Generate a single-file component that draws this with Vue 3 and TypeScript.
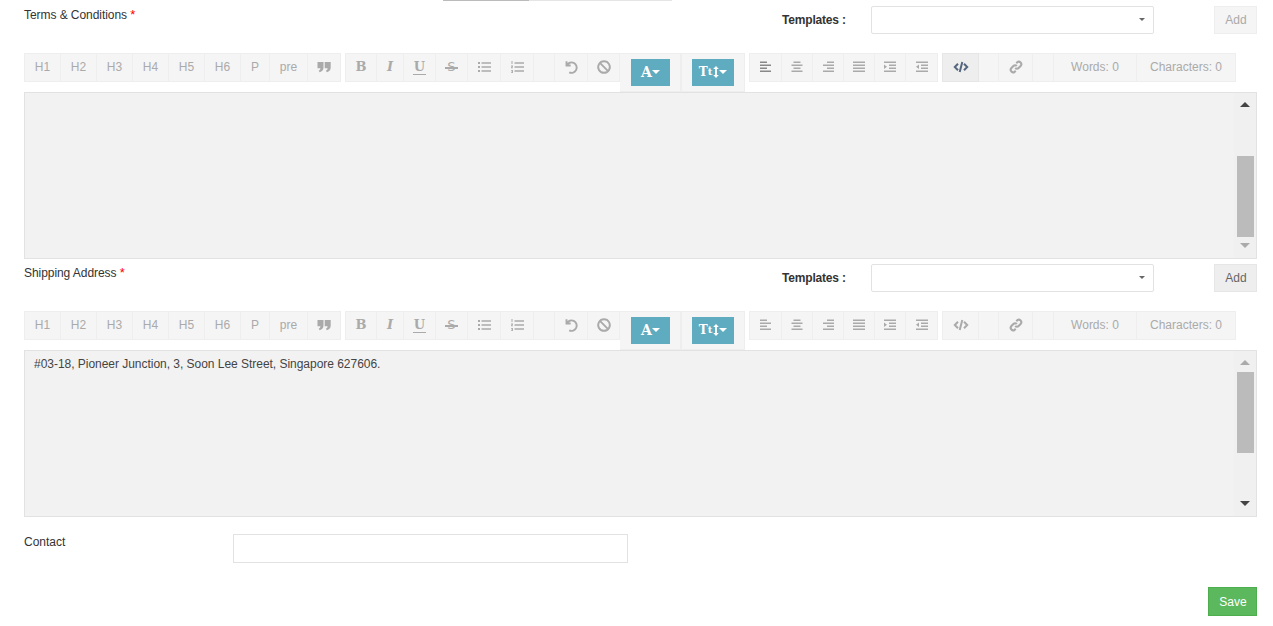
<script setup lang="ts">
interface Tool { w: number; label?: string; glyph?: string; icon?: string; cls?: string }

const icons: Record<string, { fill?: string; stroke?: string; sw?: number }> = {
  quote: { fill: 'M1.500 3h6v5.500c0 2.500-1.300 4-3.900 4.800L2.700 11.600C3.900 11 4.400 10.300 4.400 9.200H1.500zM8.700 3h6v5.500c0 2.500-1.300 4-3.900 4.800l-.9-1.700c1.200-.6 1.700-1.300 1.700-2.400H8.700z' },
  ul: { fill: 'M2 3h2v2H2zM2 7h2v2H2zM2 11h2v2H2zM5.500 3.300H15v1.400H5.500zM5.500 7.300H15v1.400H5.500zM5.500 11.300H15v1.400H5.500z' },
  ol: { fill: 'M2.500 2h1v3h-1zM2 6.500h2v1l-1 1h1v.8H2v-.8l1-1H2zM2 11h2v3H2v-.7h1.200v-.4H2.600v-.6h.6v-.6H2zM5.500 3.300H15v1.400H5.500zM5.500 7.300H15v1.400H5.500zM5.500 11.300H15v1.400H5.500z' },
  undo: { stroke: 'M3.500 2.300v4.200h4.200M3.800 6.400A5.200 5.200 0 1 1 6.200 13.300', sw: 1.900 },
  ban: { stroke: 'M8 2.200a5.800 5.800 0 1 0 .01 0zM3.900 3.900l8.200 8.200', sw: 1.900 },
  left: { fill: 'M2 2.500h7V4H2zM2 5.500h11V7H2zM2 8.500h7V10H2zM2 11.500h11V13H2z' },
  center: { fill: 'M4.500 2.500h7V4h-7zM2.500 5.500h11V7h-11zM4.500 8.500h7V10h-7zM2.500 11.500h11V13h-11z' },
  right: { fill: 'M7 2.500h7V4H7zM3 5.500h11V7H3zM7 8.500h7V10H7zM3 11.500h11V13H3z' },
  justify: { fill: 'M2 2.500h12V4H2zM2 5.500h12V7H2zM2 8.500h12V10H2zM2 11.500h12V13H2z' },
  indent: { fill: 'M2 2.500h12V4H2zM7 5.500h7V7H7zM7 8.500h7V10H7zM2 11.500h12V13H2zM2 5.500l3 2.300-3 2.200z' },
  outdent: { fill: 'M2 2.500h12V4H2zM7 5.500h7V7H7zM7 8.500h7V10H7zM2 11.500h12V13H2zM5 5.500l-3 2.300 3 2.200z' },
  code: { stroke: 'M5 4.800 1.800 8 5 11.200M11 4.800 14.200 8 11 11.200M9.300 3l-2.600 10', sw: 2 },
  link: { stroke: 'M7.200 9a2.400 2.400 0 0 0 3.400 0l2.200-2.300a2.500 2.500 0 0 0-3.500-3.500L8.300 4.200M8.800 7a2.400 2.400 0 0 0-3.400 0L3.200 9.300a2.500 2.500 0 0 0 3.500 3.500l1-1', sw: 2.100 }
}

const groupA: Tool[] = [
  { w: 37, label: 'H1' }, { w: 36, label: 'H2' }, { w: 36, label: 'H3' }, { w: 36, label: 'H4' },
  { w: 36, label: 'H5' }, { w: 36, label: 'H6' }, { w: 29, label: 'P' }, { w: 38, label: 'pre' },
  { w: 33, icon: 'quote' }
]
const groupB: Tool[] = [
  { w: 32, glyph: 'B', cls: 'g-b' }, { w: 27, glyph: 'I', cls: 'g-i' }, { w: 32, glyph: 'U', cls: 'g-u' },
  { w: 32, glyph: 'S', cls: 'g-s' }, { w: 33, icon: 'ul' }, { w: 33, icon: 'ol' }, { w: 21 },
  { w: 33, icon: 'undo' }, { w: 32, icon: 'ban' }
]
const groupD: Tool[] = [
  { w: 33, icon: 'left' }, { w: 31, icon: 'center' }, { w: 31, icon: 'right' },
  { w: 31, icon: 'justify' }, { w: 31, icon: 'indent' }, { w: 32, icon: 'outdent' }
]
const groupE: Tool[] = [
  { w: 37, icon: 'code' }, { w: 20 }, { w: 34, icon: 'link' }, { w: 21 },
  { w: 83, label: 'Words: 0' }, { w: 99, label: 'Characters: 0' }
]

const sections = [
  { id: 1, label: 'Terms & Conditions', text: '', thumbTop: 44, upDark: true, live: false },
  { id: 2, label: 'Shipping Address', text: '#03-18, Pioneer Junction, 3, Soon Lee Street, Singapore 627606.', thumbTop: 2, upDark: false, live: true }
]
const groupsLeft = [groupA, groupB]
const groupsRight = [groupD, groupE]
</script>

<template>
  <div class="page">
    <div class="stray"><span class="stray-dark"></span><span class="stray-light"></span></div>

    <section v-for="s in sections" :key="s.id" class="section">
      <div class="head">
        <div class="title">{{ s.label }} <span class="req">*</span></div>
        <div class="tpl-label">Templates :</div>
        <div class="select"><span class="caret"></span></div>
        <button class="add" :class="{ live: s.live }">Add</button>
      </div>

      <div class="toolbar">
        <div v-for="(g, i) in groupsLeft" :key="i" class="group">
          <div v-for="(t, j) in g" :key="j" class="tool" :style="{ width: t.w + 'px' }">
            <span v-if="t.label">{{ t.label }}</span>
            <span v-else-if="t.glyph" :class="t.cls">{{ t.glyph }}</span>
            <svg v-else-if="t.icon" class="ico" viewBox="0 0 16 16">
              <path v-if="icons[t.icon].fill" :d="icons[t.icon].fill" fill="currentColor" />
              <path v-if="icons[t.icon].stroke" :d="icons[t.icon].stroke" fill="none" stroke="currentColor" :stroke-width="icons[t.icon].sw" />
            </svg>
          </div>
        </div>

        <div class="drop-group">
          <div class="drop drop-a">
            <div class="drop-btn btn-a"><span class="drop-glyph">A</span><span class="drop-caret"></span></div>
          </div>
          <div class="drop drop-t">
            <div class="drop-btn btn-t">
              <span class="drop-glyph tall">T</span><span class="drop-glyph small">t</span>
              <svg class="updown" viewBox="0 0 6 12"><path d="M3 0 5.800 3H3.900v6h1.900L3 12 .2 9h1.900V3H.2z" fill="#fff" /></svg>
              <span class="drop-caret"></span>
            </div>
          </div>
        </div>

        <div v-for="(g, i) in groupsRight" :key="i" class="group">
          <div
            v-for="(t, j) in g"
            :key="j"
            class="tool"
            :class="{
              active: !s.live && t.icon === 'code',
              dark: !s.live && t.icon === 'left'
            }"
            :style="{ width: t.w + 'px' }"
          >
            <span v-if="t.label">{{ t.label }}</span>
            <svg v-else-if="t.icon" class="ico" viewBox="0 0 16 16">
              <path v-if="icons[t.icon].fill" :d="icons[t.icon].fill" fill="currentColor" />
              <path v-if="icons[t.icon].stroke" :d="icons[t.icon].stroke" fill="none" stroke="currentColor" :stroke-width="icons[t.icon].sw" />
            </svg>
          </div>
        </div>
      </div>

      <div class="editor">
        <div class="content">{{ s.text }}</div>
        <div class="scroll">
          <span class="arrow up" :class="{ on: s.upDark }"></span>
          <div class="track"><div class="thumb" :style="{ marginTop: s.thumbTop + 'px' }"></div></div>
          <span class="arrow down" :class="{ on: !s.upDark }"></span>
        </div>
      </div>
    </section>

    <div class="contact">
      <div class="contact-label">Contact</div>
      <div class="contact-input"></div>
    </div>

    <div class="actions"><button class="save">Save</button></div>
  </div>
</template>

<style scoped>
.page {
  position: relative;
  width: 1273px;
  height: 626px;
  box-sizing: border-box;
  padding: 0 16px 0 24px;
  overflow: hidden;
  font-family: "Liberation Sans", Arial, sans-serif;
  font-size: 12px;
  color: #333;
  background: #fff;
}
.stray {
  position: absolute;
  top: 0;
  left: 443px;
  display: flex;
  height: 1px;
}
.stray-dark { width: 86px; background: #bbb; }
.stray-light { width: 143px; background: #e5e5e5; }

.section { height: 258px; }
.head {
  display: flex;
  align-items: flex-start;
  height: 53px;
}
.title {
  width: 758px;
  padding-top: 8px;
  line-height: 14px;
  letter-spacing: -0.06px;
}
.req { color: #f00; font-size: 13px; }
.tpl-label {
  width: 89px;
  padding-top: 13px;
  line-height: 14px;
  font-weight: 700;
  letter-spacing: -0.18px;
}
.select {
  position: relative;
  box-sizing: border-box;
  width: 283px;
  height: 28px;
  margin-top: 6px;
  background: #fff;
  border: 1px solid #e2e2e2;
  border-radius: 2px;
}
.caret {
  position: absolute;
  top: 11px;
  right: 8px;
  border-left: 3.500px solid transparent;
  border-right: 3.500px solid transparent;
  border-top: 3.500px solid #666;
}
.add {
  box-sizing: border-box;
  width: 43px;
  height: 28px;
  margin: 6px 0 0 60px;
  padding: 0 0 0 1px;
  font: 12px "Liberation Sans", Arial, sans-serif;
  color: #aaa;
  background: #f5f5f5;
  border: 1px solid #eee;
}
.add.live {
  color: #666;
  background: #eee;
  border-color: #e6e6e6;
}

.toolbar {
  display: flex;
  align-items: flex-start;
  height: 39px;
  gap: 4px;
}
.group { display: flex; }
.tool {
  display: flex;
  align-items: center;
  justify-content: center;
  box-sizing: border-box;
  height: 29px;
  padding-bottom: 1px;
  color: #aaa;
  background: #f5f5f5;
  border: 1px solid #eee;
  border-left-width: 0;
}
.tool:first-child { border-left-width: 1px; }
.tool.active {
  color: #55677f;
  background: #eee;
  border-color: #e6e6e6;
}
.tool.dark { color: #888; }
.ico { width: 16px; height: 16px; display: block; }
.g-b, .g-i, .g-u, .g-s {
  position: relative;
  display: block;
  font-family: "DejaVu Serif", serif;
  font-size: 13px;
  font-weight: 700;
  line-height: 16px;
}
.g-i { font-style: italic; }
.g-u::after {
  content: "";
  position: absolute;
  left: -1px;
  right: -1px;
  bottom: 0;
  height: 1.500px;
  background: currentColor;
}
.g-s { font-family: "DejaVu Sans", sans-serif; font-weight: 400; }
.g-s::after {
  content: "";
  position: absolute;
  left: -2px;
  right: -2px;
  top: 8px;
  height: 1.500px;
  background: currentColor;
}

.drop-group { display: flex; margin-left: -4px; }
.drop {
  box-sizing: border-box;
  height: 39px;
  padding-top: 5px;
  background: #f5f5f5;
  border: 1px solid #eee;
  border-left-width: 0;
}
.drop-a { width: 61px; padding-left: 11px; }
.drop-t { width: 64px; padding-left: 10px; border-left: 1px solid #eee; }
.drop-btn {
  display: flex;
  align-items: center;
  justify-content: center;
  height: 27px;
  padding-bottom: 2px;
  box-sizing: border-box;
  background: #5fabbf;
  color: #fff;
}
.btn-a { width: 39px; }
.btn-t { width: 42px; }
.drop-glyph {
  font-family: "DejaVu Serif", serif;
  font-size: 14px;
  font-weight: 700;
  line-height: 14px;
}
.drop-glyph.tall { font-size: 12px; }
.drop-glyph.small { font-size: 10px; }
.updown { width: 6px; height: 12px; margin: 0 0 0 1px; }
.drop-caret {
  border-left: 4px solid transparent;
  border-right: 4px solid transparent;
  border-top: 4px solid #fff;
}

.editor {
  display: flex;
  box-sizing: border-box;
  height: 167px;
  background: #f2f2f2;
  border: 1px solid #e2e2e2;
}
.content {
  flex: 1;
  padding: 3px 9px;
  line-height: 20px;
  color: #444;
  letter-spacing: -0.03px;
}
.scroll {
  display: flex;
  flex-direction: column;
  align-items: center;
  width: 22px;
  background: #f0f0f0;
}
.arrow {
  flex: none;
  width: 0;
  height: 0;
  border-left: 5px solid transparent;
  border-right: 5px solid transparent;
  color: #aaa;
}
.arrow.on { color: #444; }
.arrow.up {
  margin-top: 9px;
  margin-bottom: 5px;
  border-bottom: 5px solid currentColor;
}
.arrow.down {
  margin-top: 5px;
  margin-bottom: 10px;
  border-top: 5px solid currentColor;
}
.track { flex: 1; width: 17px; }
.thumb { height: 81px; background: #bbb; }

.contact {
  display: flex;
  align-items: flex-start;
  margin-top: 18px;
  height: 53px;
}
.contact-label {
  width: 209px;
  padding-top: 1px;
  line-height: 14px;
}
.contact-input {
  box-sizing: border-box;
  width: 395px;
  height: 29px;
  background: #fff;
  border: 1px solid #e2e2e2;
}
.actions { display: flex; justify-content: flex-end; }
.save {
  box-sizing: border-box;
  width: 49px;
  height: 29px;
  padding: 0 0 0 1px;
  font: 12px "Liberation Sans", Arial, sans-serif;
  color: #fff;
  background: #5cb85c;
  border: 1px solid #4cae4c;
}
</style>
